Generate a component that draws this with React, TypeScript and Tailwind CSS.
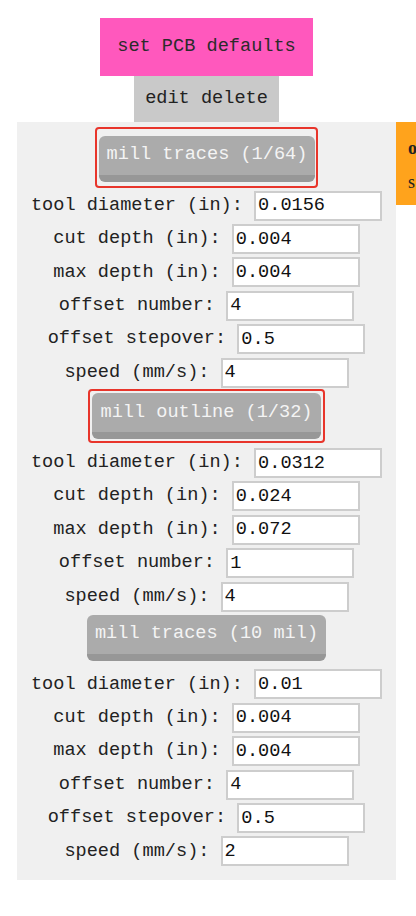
import type { ReactNode } from "react";

type Field = [string, string];

const traces: Field[] = [
  ["tool diameter (in):", "0.0156"],
  ["cut depth (in):", "0.004"],
  ["max depth (in):", "0.004"],
  ["offset number:", "4"],
  ["offset stepover:", "0.5"],
  ["speed (mm/s):", "4"],
];

const outline: Field[] = [
  ["tool diameter (in):", "0.0312"],
  ["cut depth (in):", "0.024"],
  ["max depth (in):", "0.072"],
  ["offset number:", "1"],
  ["speed (mm/s):", "4"],
];

const traces10: Field[] = [
  ["tool diameter (in):", "0.01"],
  ["cut depth (in):", "0.004"],
  ["max depth (in):", "0.004"],
  ["offset number:", "4"],
  ["offset stepover:", "0.5"],
  ["speed (mm/s):", "2"],
];

const MillButton = ({ children }: { children: ReactNode }) => (
  <button
    type="button"
    className="h-[46px] px-[8px] rounded-[6px] bg-[#ababab] border-b-[7px] border-[#979797] text-[#f4f4f4] whitespace-pre leading-none"
  >
    {children}
  </button>
);

const Rows = ({ fields }: { fields: Field[] }) => (
  <div className="flex flex-col">
    {fields.map(([label, value]) => (
      <div key={label} className="h-[33.4px] flex items-center justify-center">
        <span className="whitespace-pre text-[#222]">{label + " "}</span>
        <input
          defaultValue={value}
          className="w-[128px] h-[30px] border-2 border-[#cdcdcd] bg-white px-[2px] text-[#111] outline-none"
        />
      </div>
    ))}
  </div>
);

export default function App() {
  return (
    <div
      className="w-[416px] h-[916px] overflow-hidden bg-white text-[18.6px]"
      style={{ fontFamily: '"Liberation Mono", "DejaVu Sans Mono", monospace' }}
    >
      <div className="pl-[17px] pt-[18px]">
        <div className="w-[379px] flex flex-col items-center">
          <button
            type="button"
            className="h-[58px] px-[17px] bg-[#ff58bd] text-[#2b2b2b] whitespace-pre"
          >
            set PCB defaults
          </button>
          <button
            type="button"
            className="h-[46px] px-[11px] bg-[#c9c9c9] text-[#222] whitespace-pre"
          >
            edit delete
          </button>
        </div>
        <div className="flex items-start">
          <div className="w-[379px] shrink-0 bg-[#f0f0f0] flex flex-col items-center pt-[5px] pb-[12px]">
            <div className="border-2 border-[#e8352b] rounded-[4px] pl-[2px] pr-[1px] pt-[7px] pb-[4px]">
              <MillButton>mill traces (1/64)</MillButton>
            </div>
            <div className="mt-[1px] w-full">
              <Rows fields={traces} />
            </div>
            <div className="border-2 border-[#e8352b] rounded-[4px] p-[2px]">
              <MillButton>mill outline (1/32)</MillButton>
            </div>
            <div className="mt-[3px] w-full">
              <Rows fields={outline} />
            </div>
            <div className="mt-[1.5px]">
              <MillButton>mill traces (10 mil)</MillButton>
            </div>
            <div className="mt-[7px] w-full">
              <Rows fields={traces10} />
            </div>
          </div>
          <div
            className="w-[160px] h-[83px] shrink-0 bg-[#ffa31c] pl-[12px] pt-[9px] text-[18px] text-[#222]"
            style={{ fontFamily: '"Liberation Serif", serif' }}
          >
            <div className="h-[34px] leading-[34px] font-bold whitespace-nowrap">o</div>
            <div className="h-[34px] leading-[34px] whitespace-nowrap">s</div>
          </div>
        </div>
      </div>
    </div>
  );
}
